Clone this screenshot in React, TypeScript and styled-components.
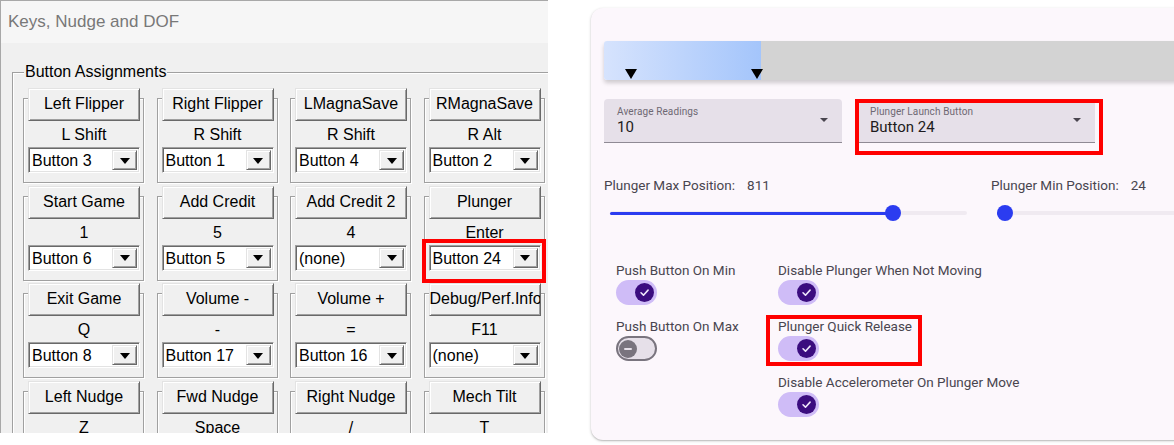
import React from 'react';
import styled, { createGlobalStyle } from 'styled-components';

const Global = createGlobalStyle`
  html, body { margin: 0; padding: 0; background: #ffffff; overflow: hidden; }
  #root { width: 1174px; height: 445px; }
`;

const Page = styled.div`
  display: flex;
  align-items: flex-start;
  gap: 43px;
  width: 1174px;
  height: 445px;
  overflow: hidden;
`;

/* ---------- Left: Windows dialog ---------- */

const WinPanel = styled.div`
  flex: 0 0 548px;
  height: 433px;
  box-sizing: border-box;
  overflow: hidden;
  background: #f0f0f0;
  border-top: 1px solid #a8a8a8;
  border-left: 1px solid #a8a8a8;
  font-family: "Liberation Sans", Arial, sans-serif;
  font-size: 16px;
  color: #000;
`;

const TitleBar = styled.div`
  height: 42px;
  display: flex;
  align-items: center;
  padding-left: 7px;
  background: #f6f6f6;
  font-size: 17px;
  color: #787878;
`;

const GroupBox = styled.div`
  position: relative;
  width: 560px;
  margin: 29px 0 0 11px;
  padding: 15px 0 0 10px;
  border: 1px solid #a0a0a0;
  box-shadow: inset 1px 1px 0 #ffffff;
  box-sizing: border-box;
  height: 400px;
`;

const GroupLabel = styled.span`
  position: absolute;
  top: -10px;
  left: 11px;
  padding: 0 1px;
  line-height: 18px;
  background: #f0f0f0;
`;

const CellGrid = styled.div`
  display: grid;
  grid-template-columns: repeat(4, 121px);
  column-gap: 12.5px;
  row-gap: 2.5px;
`;

const Frame = styled.div`
  margin-top: 10px;
  width: 121px;
  box-sizing: border-box;
  border: 1px solid #a0a0a0;
  box-shadow: inset 1px 1px 0 #ffffff, 1px 1px 0 #ffffff;
  padding: 0 3px 9px 4px;
  display: flex;
  flex-direction: column;
  align-items: flex-start;
`;

const WinButton = styled.div`
  margin-top: -11px;
  width: 112px;
  height: 33px;
  box-sizing: border-box;
  background: #f0f0f0;
  border-top: 1px solid #e3e3e3;
  border-left: 1px solid #e3e3e3;
  border-right: 1px solid #696969;
  border-bottom: 1px solid #696969;
  box-shadow: inset 1px 1px 0 #ffffff, inset -1px -1px 0 #a0a0a0;
  text-align: center;
  line-height: 30px;
  white-space: nowrap;
  overflow: hidden;
  position: relative;
  z-index: 1;
`;

const KeyLabel = styled.div`
  width: 112px;
  height: 26px;
  line-height: 27px;
  text-align: center;
`;

const ComboWrap = styled.div`
  position: relative;
`;

const Combo = styled.div`
  width: 112px;
  height: 26px;
  box-sizing: border-box;
  display: flex;
  align-items: stretch;
  background: #ffffff;
  border-top: 1px solid #a0a0a0;
  border-left: 1px solid #a0a0a0;
  border-right: 1px solid #ffffff;
  border-bottom: 1px solid #ffffff;
  box-shadow: inset 1px 1px 0 #696969, inset -1px -1px 0 #e3e3e3;
  padding: 2px;
`;

const ComboText = styled.span`
  flex: 1;
  padding-left: 1px;
  line-height: 22px;
  white-space: nowrap;
  overflow: hidden;
`;

const DropButton = styled.span`
  width: 25px;
  box-sizing: border-box;
  background: #f0f0f0;
  border-top: 1px solid #e3e3e3;
  border-left: 1px solid #e3e3e3;
  border-right: 1px solid #696969;
  border-bottom: 1px solid #696969;
  box-shadow: inset 1px 1px 0 #ffffff, inset -1px -1px 0 #a0a0a0;
  display: flex;
  align-items: center;
  justify-content: center;
`;

const DropArrow = styled.span`
  width: 0;
  height: 0;
  margin-top: 1px;
  border-left: 5.5px solid transparent;
  border-right: 5.5px solid transparent;
  border-top: 6px solid #000;
`;

const RedMark = styled.div`
  position: absolute;
  box-sizing: border-box;
  border: 4px solid #ff0000;
  pointer-events: none;
  z-index: 5;
`;

const ComboMark = styled(RedMark)`
  left: -7px;
  top: -6px;
  width: 124px;
  height: 44px;
`;

/* ---------- Right: Material card ---------- */

const Card = styled.div`
  flex: 0 0 640px;
  margin-top: 8px;
  height: 432px;
  box-sizing: border-box;
  background: #fcf7fc;
  border-radius: 12px;
  box-shadow: 0 1px 3px rgba(0, 0, 0, 0.22), 0 1px 1px rgba(0, 0, 0, 0.1);
  padding: 33px 0 0 13px;
  font-family: Roboto, "Noto Sans", sans-serif;
  color: #49454f;
`;

const RangeBar = styled.div`
  position: relative;
  display: flex;
  width: 640px;
  height: 39px;
  border-radius: 3px 0 0 3px;
  box-shadow: 0 3px 4px rgba(0, 0, 0, 0.18);
  overflow: hidden;
`;

const RangeFill = styled.div`
  flex: 0 0 157px;
  background: linear-gradient(90deg, #d6e3fd 0%, #a4c5fb 100%);
`;

const RangeRest = styled.div`
  flex: 1;
  background: #d3d3d3;
`;

const Marker = styled.span`
  position: absolute;
  bottom: 1px;
  width: 0;
  height: 0;
  border-left: 6px solid transparent;
  border-right: 6px solid transparent;
  border-top: 10px solid #000;
`;

const SelectRow = styled.div`
  display: flex;
  gap: 15px;
  margin-top: 19px;
`;

const SelectBox = styled.div`
  position: relative;
  width: 238px;
  height: 44px;
  box-sizing: border-box;
  display: flex;
  align-items: center;
  padding: 0 14px 0 13px;
  background: #e6e0e9;
  border-radius: 4px 4px 0 0;
  border-bottom: 1px solid #8f8a94;
`;

const SelectText = styled.div`
  flex: 1;
  display: flex;
  flex-direction: column;
  padding-top: 1px;
`;

const SelectLabel = styled.span`
  font-size: 10px;
  line-height: 13px;
  color: #6e6873;
  letter-spacing: 0.1px;
`;

const SelectValue = styled.span`
  font-size: 15px;
  line-height: 19px;
  color: #1d1b20;
`;

const SelectArrow = styled.span`
  width: 0;
  height: 0;
  border-left: 4px solid transparent;
  border-right: 4px solid transparent;
  border-top: 4.5px solid #49454f;
  margin-bottom: 2px;
`;

const SelectMark = styled(RedMark)`
  left: -2px;
  top: 0;
  width: 248px;
  height: 56px;
`;

const SliderGrid = styled.div`
  display: grid;
  grid-template-columns: 369px 369px;
  column-gap: 18px;
  margin-top: 34px;
`;

const SliderLabel = styled.div`
  font-size: 13.5px;
  line-height: 17px;
  color: #49454f;
  white-space: nowrap;
`;

const SliderValue = styled.span`
  margin-left: 12px;
`;

const SliderTrack = styled.div`
  position: relative;
  height: 20px;
  margin: 9px 6px 0 6px;
`;

const Rail = styled.div`
  position: absolute;
  left: 0;
  right: 0;
  top: 8px;
  height: 4px;
  border-radius: 2px;
  background: #f0eaf1;
`;

const ActiveRail = styled.div`
  position: absolute;
  left: 0;
  top: 8.5px;
  height: 3px;
  border-radius: 2px;
  background: #2b3cf0;
`;

const Thumb = styled.div`
  position: absolute;
  top: 2px;
  width: 16px;
  height: 16px;
  margin-left: -8px;
  border-radius: 50%;
  background: #2b3cf0;
`;

const SwitchGrid = styled.div`
  display: grid;
  grid-template-columns: 162px auto;
  row-gap: 13px;
  margin: 39px 0 0 12px;
`;

const SwitchItem = styled.div`
  position: relative;
  display: flex;
  flex-direction: column;
  align-items: flex-start;
  gap: 2px;
`;

const SwitchLabel = styled.span`
  font-size: 13.5px;
  line-height: 16px;
  color: #49454f;
  white-space: nowrap;
`;

const SwitchTrack = styled.span<{ $on: boolean }>`
  width: 41px;
  height: 25px;
  box-sizing: border-box;
  border-radius: 13px;
  display: flex;
  align-items: center;
  justify-content: ${p => (p.$on ? 'flex-end' : 'flex-start')};
  padding: 0 ${p => (p.$on ? '3px' : '1px')};
  background: ${p => (p.$on ? '#cfbcf7' : '#e6e0e9')};
  border: ${p => (p.$on ? 'none' : '2px solid #79747e')};
`;

const SwitchThumb = styled.span<{ $on: boolean }>`
  width: ${p => (p.$on ? '19px' : '18px')};
  height: ${p => (p.$on ? '19px' : '18px')};
  border-radius: 50%;
  background: ${p => (p.$on ? '#3b0d7f' : '#79747e')};
  display: flex;
  align-items: center;
  justify-content: center;
`;

const MinusBar = styled.span`
  width: 8px;
  height: 2px;
  border-radius: 1px;
  background: #e6e0e9;
`;

const SwitchMark = styled(RedMark)`
  left: -12px;
  top: -3px;
  width: 156px;
  height: 51px;
`;

const Empty = styled.div``;

/* ---------- Data ---------- */

type Cell = { name: string; key: string; value?: string; mark?: boolean };

const cells: Cell[] = [
  { name: 'Left Flipper', key: 'L Shift', value: 'Button 3' },
  { name: 'Right Flipper', key: 'R Shift', value: 'Button 1' },
  { name: 'LMagnaSave', key: 'R Shift', value: 'Button 4' },
  { name: 'RMagnaSave', key: 'R Alt', value: 'Button 2' },
  { name: 'Start Game', key: '1', value: 'Button 6' },
  { name: 'Add Credit', key: '5', value: 'Button 5' },
  { name: 'Add Credit 2', key: '4', value: '(none)' },
  { name: 'Plunger', key: 'Enter', value: 'Button 24', mark: true },
  { name: 'Exit Game', key: 'Q', value: 'Button 8' },
  { name: 'Volume -', key: '-', value: 'Button 17' },
  { name: 'Volume +', key: '=', value: 'Button 16' },
  { name: 'Debug/Perf.Info', key: 'F11', value: '(none)' },
  { name: 'Left Nudge', key: 'Z' },
  { name: 'Fwd Nudge', key: 'Space' },
  { name: 'Right Nudge', key: '/' },
  { name: 'Mech Tilt', key: 'T' },
];

const MAX = 1023;

const Check = () => (
  <svg width="11" height="11" viewBox="0 0 12 12" fill="none">
    <path d="M2.2 6.3 L4.9 8.9 L9.9 3.4" stroke="#efe7fb" strokeWidth="1.7" strokeLinecap="round" strokeLinejoin="round" />
  </svg>
);

const Switch = ({ on }: { on: boolean }) => (
  <SwitchTrack $on={on}>
    <SwitchThumb $on={on}>{on ? <Check /> : <MinusBar />}</SwitchThumb>
  </SwitchTrack>
);

const Slider = ({ label, value }: { label: string; value: number }) => {
  const pct = (value / MAX) * 100;
  return (
    <div>
      <SliderLabel>
        {label}
        <SliderValue>{value}</SliderValue>
      </SliderLabel>
      <SliderTrack>
        <Rail />
        <ActiveRail style={{ width: `${pct}%` }} />
        <Thumb style={{ left: `${pct}%` }} />
      </SliderTrack>
    </div>
  );
};

export default function App() {
  return (
    <>
      <Global />
      <Page>
        <WinPanel>
          <TitleBar>Keys, Nudge and DOF</TitleBar>
          <GroupBox>
            <GroupLabel>Button Assignments</GroupLabel>
            <CellGrid>
              {cells.map(c => (
                <Frame key={c.name}>
                  <WinButton>{c.name}</WinButton>
                  <KeyLabel>{c.key}</KeyLabel>
                  {c.value && (
                    <ComboWrap>
                      <Combo>
                        <ComboText>{c.value}</ComboText>
                        <DropButton>
                          <DropArrow />
                        </DropButton>
                      </Combo>
                      {c.mark && <ComboMark />}
                    </ComboWrap>
                  )}
                </Frame>
              ))}
            </CellGrid>
          </GroupBox>
        </WinPanel>

        <Card>
          <RangeBar>
            <RangeFill />
            <RangeRest />
            <Marker style={{ left: 21 }} />
            <Marker style={{ left: 147 }} />
          </RangeBar>

          <SelectRow>
            <SelectBox>
              <SelectText>
                <SelectLabel>Average Readings</SelectLabel>
                <SelectValue>10</SelectValue>
              </SelectText>
              <SelectArrow />
            </SelectBox>
            <SelectBox>
              <SelectText>
                <SelectLabel>Plunger Launch Button</SelectLabel>
                <SelectValue>Button 24</SelectValue>
              </SelectText>
              <SelectArrow />
              <SelectMark />
            </SelectBox>
          </SelectRow>

          <SliderGrid>
            <Slider label="Plunger Max Position:" value={811} />
            <Slider label="Plunger Min Position:" value={24} />
          </SliderGrid>

          <SwitchGrid>
            <SwitchItem>
              <SwitchLabel>Push Button On Min</SwitchLabel>
              <Switch on />
            </SwitchItem>
            <SwitchItem>
              <SwitchLabel>Disable Plunger When Not Moving</SwitchLabel>
              <Switch on />
            </SwitchItem>
            <SwitchItem>
              <SwitchLabel>Push Button On Max</SwitchLabel>
              <Switch on={false} />
            </SwitchItem>
            <SwitchItem>
              <SwitchLabel>Plunger Quick Release</SwitchLabel>
              <Switch on />
              <SwitchMark />
            </SwitchItem>
            <Empty />
            <SwitchItem>
              <SwitchLabel>Disable Accelerometer On Plunger Move</SwitchLabel>
              <Switch on />
            </SwitchItem>
          </SwitchGrid>
        </Card>
      </Page>
    </>
  );
}
